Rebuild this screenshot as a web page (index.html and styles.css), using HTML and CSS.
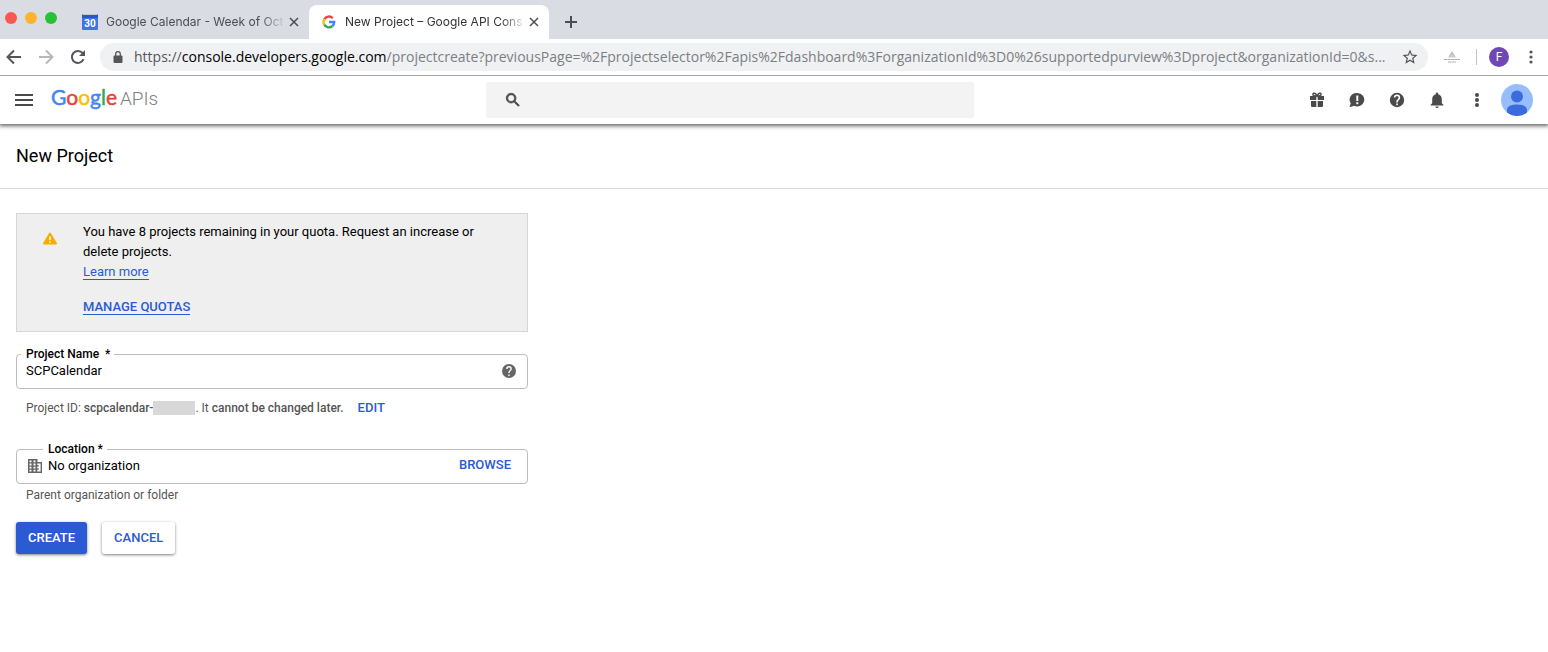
FILE: index.html
```html
<!DOCTYPE html>
<html lang="en">

<head>
    <meta charset="UTF-8">
    <meta name="viewport" content="width=device-width, initial-scale=1.0">
    <title>New Project – Google API Console</title>
    <link rel="stylesheet" href="styles.css">
</head>

<body>
    <div class="browser">
        <div class="tab-strip">
            <div class="window-controls">
                <span class="dot red"></span>
                <span class="dot yellow"></span>
                <span class="dot green"></span>
            </div>
            <div class="tab">
                <svg class="favicon" viewBox="0 0 16 16">
                    <rect x="0" y="0" width="16" height="16" rx="1" fill="#3a78e7"/>
                    <path d="M0 1h16v3H0z" fill="#2a56c6"/>
                    <path d="M1 0h14v1H1z" fill="#c5c9d3"/>
                    <text x="8" y="13" text-anchor="middle" class="favicon-day">30</text>
                </svg>
                <span class="tab-title">Google Calendar - Week of Oct</span>
                <button class="tab-close" aria-label="Close tab">
                    <svg viewBox="0 0 10 10"><path d="M1 1l8 8M9 1l-8 8"/></svg>
                </button>
            </div>
            <div class="tab active">
                <svg class="favicon" viewBox="0 0 16 16" fill="none" stroke-width="2.4">
                    <path d="M3.3 5.3A5.2 5.2 0 0 1 11.7 4.2" stroke="#ea4335"/>
                    <path d="M3.3 10.7A5.2 5.2 0 0 1 3.3 5.3" stroke="#fbbc05"/>
                    <path d="M11.4 12A5.2 5.2 0 0 1 3.3 10.7" stroke="#34a853"/>
                    <path d="M8 8H13.2A5.2 5.2 0 0 1 11.4 12" stroke="#4285f4"/>
                </svg>
                <span class="tab-title">New Project – Google API Cons</span>
                <button class="tab-close" aria-label="Close tab">
                    <svg viewBox="0 0 10 10"><path d="M1 1l8 8M9 1l-8 8"/></svg>
                </button>
            </div>
            <button class="new-tab" aria-label="New tab">
                <svg viewBox="0 0 12 12"><path d="M6 0v12M0 6h12"/></svg>
            </button>
        </div>

        <div class="toolbar">
            <button class="nav-button" aria-label="Back">
                <svg viewBox="0 0 16 16"><path d="M15 8H2M8 1.500L1.500 8L8 14.500"/></svg>
            </button>
            <button class="nav-button disabled" aria-label="Forward">
                <svg viewBox="0 0 16 16"><path d="M1 8h13M8 1.500L14.500 8L8 14.500"/></svg>
            </button>
            <button class="nav-button" aria-label="Reload">
                <svg viewBox="0 0 16 16"><path d="M13.500 10.200A6 6 0 1 1 12.600 4.200"/><path class="solid" d="M15 1v6H9z"/></svg>
            </button>
            <div class="address">
                <svg class="lock" viewBox="0 0 10 12"><rect x="0.500" y="4.500" width="9" height="7.500" rx="1"/><path d="M2.700 5V3a2.300 2.300 0 0 1 4.600 0v2"/></svg>
                <span class="url">https://<b>console.developers.google.com</b><i>/projectcreate?previousPage=%2Fprojectselector%2Fapis%2Fdashboard%3ForganizationId%3D0%26supportedpurview%3Dproject&amp;organizationId=0&amp;s...</i></span>
                <button class="star" aria-label="Bookmark this page">
                    <svg viewBox="0 0 24 24"><path d="M22 9.240l-7.190-.620L12 2 9.190 8.630 2 9.240l5.460 4.730L5.820 21 12 17.270 18.180 21l-1.630-7.030L22 9.240zM12 15.400l-3.760 2.270 1-4.280-3.320-2.880 4.380-.380L12 6.100l1.710 4.040 4.380.380-3.320 2.880 1 4.280L12 15.400z"/></svg>
                </button>
            </div>
            <svg class="extension" viewBox="0 0 16 12">
                <path d="M8 0l3.500 6h-7z" fill="#bbb"/>
                <path d="M6 3.500l-2 3h8l-2-3" fill="#ccc"/>
                <path d="M0 8.500h16M4 11h8" stroke="#aaa" stroke-dasharray="3 .5"/>
            </svg>
            <span class="divider"></span>
            <button class="profile" aria-label="Profile">F</button>
            <button class="browser-menu" aria-label="Menu">
                <svg viewBox="0 0 4 14"><circle cx="2" cy="2" r="1.600"/><circle cx="2" cy="7" r="1.600"/><circle cx="2" cy="12" r="1.600"/></svg>
            </button>
        </div>
    </div>

    <header class="header">
        <div class="header-left">
            <button class="icon-button hamburger" aria-label="Navigation menu">
                <svg viewBox="0 0 18 12"><path d="M0 0h18v2H0zM0 5h18v2H0zM0 10h18v2H0z"/></svg>
            </button>
            <a class="logo" href="#"><span class="google"><span class="g-blue">G</span><span class="g-red">o</span><span class="g-yellow">o</span><span class="g-blue">g</span><span class="g-green">l</span><span class="g-red">e</span></span><span class="apis">APIs</span></a>
        </div>
        <div class="search">
            <svg viewBox="0 0 24 24"><path d="M15.500 14h-.790l-.280-.270A6.471 6.471 0 0 0 16 9.500 6.500 6.500 0 1 0 9.500 16c1.610 0 3.090-.590 4.230-1.570l.270.280v.790l5 4.990L20.490 19l-4.990-5zm-6 0C7.010 14 5 11.990 5 9.500S7.010 5 9.500 5 14 7.010 14 9.500 11.990 14 9.500 14z"/></svg>
            <input type="text" aria-label="Search">
        </div>
        <div class="header-right">
            <button class="icon-button" aria-label="Free trial">
                <svg viewBox="0 0 16 16"><path d="M1 4h6.300v4H1zM8.700 4H15v4H8.700zM2 9h5.300v6H3a1 1 0 0 1-1-1zM8.700 9H14v5a1 1 0 0 1-1 1H8.700z"/><path d="M8 4C6.500 1 4.500.5 4 2s1 2 4 2c3 0 4.500-.5 4-2S9.500 1 8 4z" fill="none" stroke="#4a4a4a" stroke-width="1.500"/></svg>
            </button>
            <button class="icon-button" aria-label="Send feedback">
                <svg viewBox="0 0 16 16"><path fill-rule="evenodd" d="M8.300 1a7.200 6.700 0 1 1-3.200 12.800L.5 15.200l1.200-4A6.900 6.700 0 0 1 8.300 1zM7.300 3.500V9h2V3.500zM7.300 10.200v2h2v-2z"/></svg>
            </button>
            <button class="icon-button" aria-label="Help">
                <svg viewBox="2 2 20 20"><path d="M12 3a9 9 0 1 0 0 18 9 9 0 0 0 0-18zm1 15.500h-2v-2h2zm2.070-7.250l-.9.920C13.450 12.900 13 13.500 13 15h-2v-.5c0-1.100.450-2.100 1.170-2.830l1.240-1.260c.370-.360.590-.860.590-1.410a2 2 0 0 0-4 0H8a4 4 0 0 1 8 0c0 .880-.360 1.680-.930 2.250z"/></svg>
            </button>
            <button class="icon-button" aria-label="Notifications">
                <svg viewBox="2 2 20 20"><path d="M12 22c1.100 0 2-.9 2-2h-4a2 2 0 0 0 2 2zm6-6v-5c0-3.070-1.640-5.640-4.500-6.320V4a1.500 1.500 0 0 0-3 0v.680C7.630 5.360 6 7.920 6 11v5l-2 2v1h16v-1z"/></svg>
            </button>
            <button class="icon-button" aria-label="More options">
                <svg viewBox="0 0 16 16"><circle cx="8" cy="3" r="2"/><circle cx="8" cy="8" r="2"/><circle cx="8" cy="13" r="2"/></svg>
            </button>
            <button class="avatar" aria-label="Account">
                <svg viewBox="0 0 32 32"><circle cx="16" cy="16" r="16" fill="#97bdfd"/><circle cx="16" cy="12.500" r="6" fill="#3b6bdd"/><path d="M6 28.500v-2.500c0-4 4.500-5.500 10-5.500s10 1.500 10 5.500v2.500a16 16 0 0 1-20 0z" fill="#3b6bdd"/></svg>
            </button>
        </div>
    </header>

    <h1 class="page-title">New Project</h1>

    <main class="content">
        <div class="quota">
            <svg class="warning" viewBox="0 0 14 13"><path fill="#f9ab00" stroke="#f9ab00" stroke-width="2" stroke-linejoin="round" d="M7 1.500L13 11.500H1z"/><path fill="#fff" d="M6.200 4.500h1.600v3.600H6.200zM6.200 9.200h1.600v1.600H6.200z"/></svg>
            <div class="quota-text">
                <p>You have 8 projects remaining in your quota. Request an increase or delete projects.</p>
                <a href="#">Learn more</a>
                <a class="manage" href="#">MANAGE QUOTAS</a>
            </div>
        </div>

        <form>
            <fieldset class="field">
                <legend><label for="project-name">Project Name&nbsp; *</label></legend>
                <div class="field-row">
                    <input id="project-name" type="text" value="SCPCalendar">
                    <button class="field-help" type="button" aria-label="Help">
                        <svg viewBox="2 2 20 20"><path d="M12 2a10 10 0 1 0 0 20 10 10 0 0 0 0-20zm1 17h-2v-2h2zm2.070-7.750l-.9.920C13.450 12.900 13 13.500 13 15h-2v-.5c0-1.100.450-2.100 1.170-2.830l1.240-1.260c.370-.360.590-.860.590-1.410a2 2 0 0 0-4 0H8a4 4 0 0 1 8 0c0 .880-.360 1.680-.930 2.250z"/></svg>
                    </button>
                </div>
            </fieldset>
            <div class="hint project-id">
                <span>Project ID: <b>scpcalendar-</b></span><span class="redacted"></span><span>. It <b>cannot be changed later.</b></span>
                <button class="text-button edit" type="button">EDIT</button>
            </div>

            <fieldset class="field location">
                <legend><label for="location">Location *</label></legend>
                <div class="field-row">
                    <svg class="organization" viewBox="0 0 14 14"><path fill-rule="evenodd" d="M0 0h9.500v3H14v11H0zM1.500 1.500v1.800h2V1.500zM5.500 1.500v1.800h2V1.500zM1.500 4.600v1.800h2V4.600zM5.500 4.600v1.800h2V4.600zM1.500 7.700v1.800h2V7.700zM5.500 7.700v1.800h2V7.700zM1.500 10.800v1.800h2v-1.800zM5.500 10.800v1.800h2v-1.800zM9.200 4.500v1.600h1.500v1.500H9.200v1.700h1.500v1.500H9.200v1.800h3.400V4.500z"/></svg>
                    <input id="location" type="text" value="No organization">
                    <button class="text-button" type="button">BROWSE</button>
                </div>
            </fieldset>
            <div class="hint">Parent organization or folder</div>

            <div class="actions">
                <button class="button primary" type="button">CREATE</button>
                <button class="button" type="button">CANCEL</button>
            </div>
        </form>
    </main>
</body>

</html>
```
FILE: styles.css
```css
* {
    box-sizing: border-box;
}

body {
    margin: 0;
    background-color: white;
    color: black;
    font-family: Roboto, Arial, sans-serif;
    font-size: 13px;
    line-height: 20px;
}

button {
    display: flex;
    align-items: center;
    justify-content: center;
    flex-shrink: 0;
    padding: 0;
    border: none;
    background: none;
    font-family: inherit;
    cursor: pointer;
}

input {
    flex: 1;
    min-width: 0;
    padding: 0;
    border: none;
    outline: none;
    background: none;
    font-family: inherit;
    font-size: 13px;
}

svg {
    display: block;
    flex-shrink: 0;
}

/* browser */
.tab-strip {
    display: flex;
    height: 39px;
    padding: 5px 8px 0;
    background-color: #dadce3;
}

.window-controls {
    display: flex;
    gap: 8px;
    width: 61px;
    padding-top: 7px;
    margin-left: -3px;
}

.dot {
    width: 12px;
    height: 12px;
    border-radius: 50%;
}

.red {
    background-color: #fc5650;
}

.yellow {
    background-color: #fdb32b;
}

.green {
    background-color: #27c138;
}

.tab {
    display: flex;
    align-items: center;
    width: 240px;
    padding: 0 7px 0 13px;
    margin-left: 3px;
    color: #4a4d52;
    font-family: Inter, Roboto, sans-serif;
    font-size: 12px;
}

.tab.active {
    padding-left: 12px;
    margin-left: 0;
    border-radius: 8px 8px 0 0;
    background-color: white;
    color: #333;
}

.favicon {
    width: 16px;
    height: 16px;
    margin-right: 8px;
}

.favicon-day {
    fill: white;
    font-family: Roboto, sans-serif;
    font-size: 10px;
    font-weight: bold;
}

.tab-title {
    flex: 1;
    overflow: hidden;
    white-space: nowrap;
    mask-image: linear-gradient(to right, black 86%, transparent);
}

.tab-close {
    width: 16px;
    height: 16px;
}

.tab-close svg {
    width: 10px;
    height: 10px;
    stroke: #4a4d52;
    stroke-width: 1.5;
}

.new-tab {
    width: 44px;
    height: 34px;
}

.new-tab svg {
    width: 12px;
    height: 12px;
    stroke: #4a4d52;
    stroke-width: 2;
}

.toolbar {
    display: flex;
    align-items: center;
    height: 37px;
    padding: 0 15px 0 6px;
    border-bottom: 1px solid #a6a6a6;
}

.nav-button {
    width: 16px;
    height: 16px;
    margin-right: 16px;
}

.nav-button svg {
    width: 16px;
    height: 16px;
    fill: none;
    stroke: #54565b;
    stroke-width: 2;
}

.nav-button.disabled svg {
    stroke: #b8b8b8;
}

.nav-button .solid {
    fill: #54565b;
    stroke: none;
}

.address {
    display: flex;
    align-items: center;
    flex: 1;
    min-width: 0;
    height: 28px;
    padding: 0 9px 0 13px;
    margin-left: -2px;
    border-radius: 14px;
    background-color: #f0f1f3;
}

.lock {
    width: 10px;
    height: 12px;
    margin-right: 11px;
    fill: #54565b;
}

.lock path {
    fill: none;
    stroke: #54565b;
    stroke-width: 1.3;
}

.url {
    flex: 1;
    overflow: hidden;
    white-space: nowrap;
    text-overflow: ellipsis;
    color: #54565b;
    font-family: "Open Sans", sans-serif;
    font-size: 14px;
}

.url b {
    color: black;
    font-weight: normal;
}

.url i {
    color: #7b7f84;
    font-style: normal;
}

.star {
    margin-left: 12px;
}

.star svg {
    width: 18px;
    height: 18px;
    fill: #54565b;
}

.extension {
    width: 16px;
    height: 12px;
    margin-left: 16px;
}

.divider {
    width: 1px;
    height: 16px;
    margin: 0 12px 0 16px;
    background-color: #c4c4c4;
}

.profile {
    width: 20px;
    height: 20px;
    border-radius: 50%;
    background-color: #6f48b5;
    color: white;
    font-size: 12px;
}

.browser-menu {
    margin-left: 20px;
}

.browser-menu svg {
    width: 4px;
    height: 14px;
    fill: #54565b;
}

/* header */
.header {
    display: grid;
    grid-template-columns: 26fr 488px 31fr;
    gap: 16px;
    align-items: center;
    height: 48px;
    padding: 0 15px;
    box-shadow: 0 1px 4px 1px rgba(0, 0, 0, 0.6);
    clip-path: inset(0 0 -8px 0);
}

.header-left,
.header-right {
    display: flex;
    align-items: center;
}

.header-right {
    justify-content: flex-end;
    gap: 24px;
}

.icon-button svg {
    width: 16px;
    height: 16px;
    fill: #4a4a4a;
}

.hamburger svg {
    width: 18px;
    height: 12px;
}

.logo {
    display: flex;
    align-items: baseline;
    gap: 3px;
    padding-bottom: 4px;
    margin-left: 18px;
    font-size: 19px;
    text-decoration: none;
}

.google {
    font-family: Lato, sans-serif;
    font-size: 21px;
    -webkit-text-stroke: 0.5px;
}

.apis {
    color: #808080;
    font-weight: 300;
}

.g-blue {
    color: #4285f4;
}

.g-red {
    color: #ea4335;
}

.g-yellow {
    color: #fbbc05;
}

.g-green {
    color: #34a853;
}

.search {
    display: flex;
    align-items: center;
    height: 36px;
    padding: 0 18px;
    border-radius: 2px;
    background-color: #f3f3f3;
}

.search svg {
    width: 18px;
    height: 18px;
    margin-right: 12px;
    fill: #4a4a4a;
    stroke: #4a4a4a;
}

.avatar {
    margin-left: -8px;
}

.avatar svg {
    width: 32px;
    height: 32px;
}

/* page */
.page-title {
    height: 65px;
    padding: 20px 16px;
    margin: 0;
    border-bottom: 1px solid #dcdcdc;
    font-size: 18px;
    font-weight: normal;
    line-height: 24px;
}

.content {
    max-width: 544px;
    padding: 24px 16px;
}

.quota {
    display: flex;
    gap: 26px;
    padding: 8px 26px 16px;
    border: 1px solid #d6d6d6;
    background-color: #efefef;
}

.warning {
    width: 14px;
    height: 13px;
    margin-top: 10px;
}

.quota-text {
    display: flex;
    flex-direction: column;
    align-items: flex-start;
}

.quota-text p {
    margin: 0;
}

.quota a {
    border-bottom: 1px solid #2b5bd3;
    color: #2b5bd3;
    line-height: 14px;
    margin-top: 3px;
    text-decoration: none;
}

.quota .manage {
    margin-top: 20px;
    font-weight: 500;
}

.field {
    min-width: 0;
    padding: 0 16px 0 4px;
    margin: 15px 0 0;
    border: 1px solid #bdbdbd;
    border-radius: 4px;
}

.field legend {
    padding: 0 4px 0 5px;
    font-size: 12px;
    font-weight: 500;
    line-height: 14px;
}

.field-row {
    display: flex;
    align-items: center;
    height: 27px;
    padding: 0 0 8px 5px;
}

.field-help {
    margin-right: -5px;
}

.field-help svg {
    width: 14px;
    height: 14px;
    fill: #666;
}

.hint {
    padding-left: 10px;
    color: #555;
    font-size: 12px;
}

.hint b {
    font-weight: 500;
}

.project-id {
    display: flex;
    align-items: center;
    margin-top: 9px;
}

.redacted {
    width: 42px;
    height: 14px;
    background-color: #d8d8d8;
}

.text-button {
    padding-bottom: 2px;
    color: #2b5bd3;
    font-size: 13px;
    font-weight: 500;
}

.edit {
    margin-left: 14px;
}

.location {
    margin-top: 24px;
}

.location legend {
    margin-left: 22px;
}

.location .field-row {
    padding-left: 7px;
}

.organization {
    width: 14px;
    height: 14px;
    margin-right: 6px;
    fill: #666;
}

.location + .hint {
    margin-top: 1px;
}

.actions {
    display: flex;
    gap: 15px;
    margin-top: 17px;
}

.button {
    height: 32px;
    padding: 0 12px 1px;
    border-radius: 3px;
    box-shadow: 0 1px 3px rgba(0, 0, 0, 0.5);
    background-color: white;
    color: #2b5bd3;
    font-size: 13px;
    font-weight: 500;
}

.primary {
    background-color: #2b5bd3;
    color: white;
}
```
